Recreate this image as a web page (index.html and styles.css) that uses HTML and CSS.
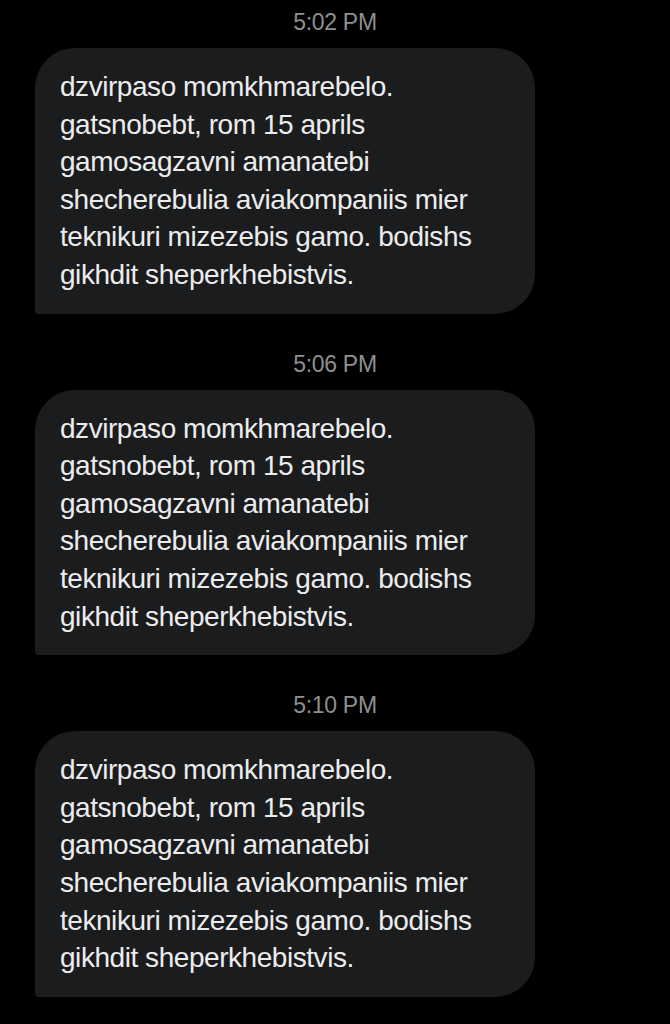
FILE: index.html
```html
<!DOCTYPE html>
<html lang="en">
<head>
  <meta charset="UTF-8" />
  <meta name="viewport" content="width=device-width, initial-scale=1.0"/>
  <title>Messages</title>
  <link rel="stylesheet" href="styles.css">
</head>
<body>
  <div class="thread">
    <!-- Message 1 -->
    <div class="group">
      <div class="time">5:02 PM</div>
      <div class="bubble">dzvirpaso momkhmarebelo. gatsnobebt, rom 15 aprils gamosagzavni amanatebi shecherebulia aviakompaniis mier teknikuri mizezebis gamo. bodishs gikhdit sheperkhebistvis.</div>
    </div>

    <!-- Message 2 -->
    <div class="group">
      <div class="time">5:06 PM</div>
      <div class="bubble">dzvirpaso momkhmarebelo. gatsnobebt, rom 15 aprils gamosagzavni amanatebi shecherebulia aviakompaniis mier teknikuri mizezebis gamo. bodishs gikhdit sheperkhebistvis.</div>
    </div>

    <!-- Message 3 -->
    <div class="group">
      <div class="time">5:10 PM</div>
      <div class="bubble">dzvirpaso momkhmarebelo. gatsnobebt, rom 15 aprils gamosagzavni amanatebi shecherebulia aviakompaniis mier teknikuri mizezebis gamo. bodishs gikhdit sheperkhebistvis.</div>
    </div>
  </div>
</body>
</html>
```

FILE: styles.css
```css
body {
  margin: 0;
  background: #000;
  font-family: 'Liberation Sans', Arial, sans-serif;
  color: #ececed;
}

.thread {
  padding-top: 8px;
}

.group {
  margin-bottom: 36px;
}

.time {
  height: 28px;
  line-height: 28px;
  font-size: 23px;
  color: #8f8f8f;
  text-align: center;
  letter-spacing: -0.3px;
  margin-bottom: 12px;
}

.bubble {
  box-sizing: border-box;
  width: 500px;
  margin-left: 35px;
  padding: 20px 25px;
  background: #1b1c1e;
  border-radius: 40px 40px 40px 4px;
  font-size: 28px;
  line-height: 37.6px;
  letter-spacing: -0.45px;
}
```
